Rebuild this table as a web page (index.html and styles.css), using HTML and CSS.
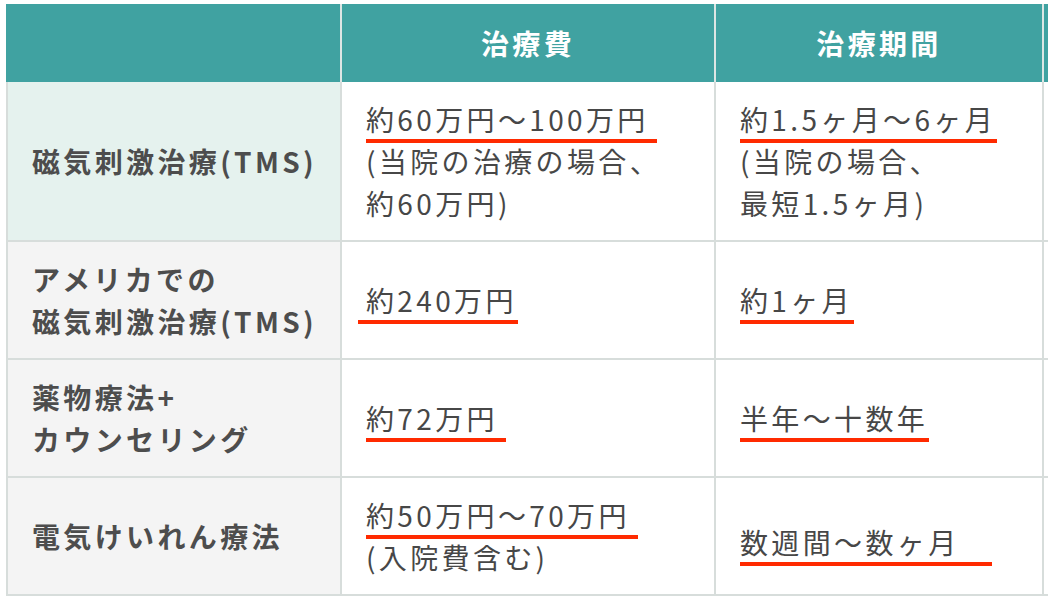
FILE: index.html
```html
<!DOCTYPE html>
<html lang="ja">
<head>
<meta charset="utf-8">
<title>治療法の比較</title>
<link rel="stylesheet" href="styles.css">
</head>
<body>
<div class="wrap">
  <table class="compare">
    <colgroup>
      <col class="c-label">
      <col class="c-cost">
      <col class="c-period">
      <col class="c-extra">
    </colgroup>
    <thead>
      <tr>
        <th class="h-blank"></th>
        <th>治療費</th>
        <th>治療期間</th>
        <th></th>
      </tr>
    </thead>
    <tbody>
      <tr class="row-tms">
        <th class="label">磁気刺激治療(TMS)</th>
        <td><span class="ul ul-wide">約60万円〜100万円</span><br>(当院の治療の場合、<br>約60万円)</td>
        <td><span class="ul">約1.5ヶ月〜6ヶ月</span><br>(当院の場合、<br>最短1.5ヶ月)</td>
        <td></td>
      </tr>
      <tr>
        <th class="label">アメリカでの<br>磁気刺激治療(TMS)</th>
        <td><span class="ul ul-lead">約240万円</span></td>
        <td><span class="ul">約1ヶ月</span></td>
        <td></td>
      </tr>
      <tr>
        <th class="label">薬物療法+<br>カウンセリング</th>
        <td><span class="ul ul-wide">約72万円</span></td>
        <td><span class="ul">半年〜十数年</span></td>
        <td></td>
      </tr>
      <tr>
        <th class="label">電気けいれん療法</th>
        <td><span class="ul ul-wide">約50万円〜70万円</span><br>(入院費含む)</td>
        <td class="cell-low"><span class="ul ul-tail">数週間〜数ヶ月</span></td>
        <td></td>
      </tr>
    </tbody>
  </table>
</div>
</body>
</html>
```

FILE: styles.css
```css
html, body {
  margin: 0;
  padding: 0;
  overflow: hidden;
  background: #ffffff;
}

body {
  font-family: "Noto Sans CJK JP", "Noto Sans", sans-serif;
  color: #474747;
}

.wrap {
  padding: 4px 0 0 6px;
}

.compare {
  border-collapse: separate;
  border-spacing: 0;
  table-layout: fixed;
  width: 1338px;
}

.c-label { width: 336px; }
.c-cost { width: 374px; }
.c-period { width: 328px; }
.c-extra { width: 300px; }

.compare th,
.compare td {
  padding: 16px 24px;
  font-size: 28px;
  line-height: 42px;
  letter-spacing: 0.12em;
  vertical-align: middle;
  text-align: left;
  font-weight: 400;
  white-space: nowrap;
  border-right: 2px solid #d7dddb;
  border-bottom: 2px solid #d7dddb;
}

.compare thead th {
  background: #40a2a1;
  color: #ffffff;
  font-weight: 700;
  text-align: center;
  padding: 18px 0;
  border-bottom: 0;
  border-right-color: #dde6e4;
}

.compare thead th.h-blank {
  border-left: 2px solid #40a2a1;
}

.compare tbody th.label {
  padding-right: 0;
  border-left: 2px solid #d7dddb;
  background: #f4f4f4;
  font-weight: 700;
  color: #4d4d4d;
}

.compare tbody .row-tms th.label {
  background: #e5f2ee;
}

.compare td.cell-low {
  padding-top: 22px;
  padding-bottom: 10px;
}

.ul {
  padding-right: 1px;
  border-bottom: 4px solid #ff2a00;
}

.ul-wide {
  padding-right: 8px;
}

.ul-lead {
  padding-left: 8px;
  margin-left: -8px;
}

.ul-tail {
  padding-right: 32px;
}
```
